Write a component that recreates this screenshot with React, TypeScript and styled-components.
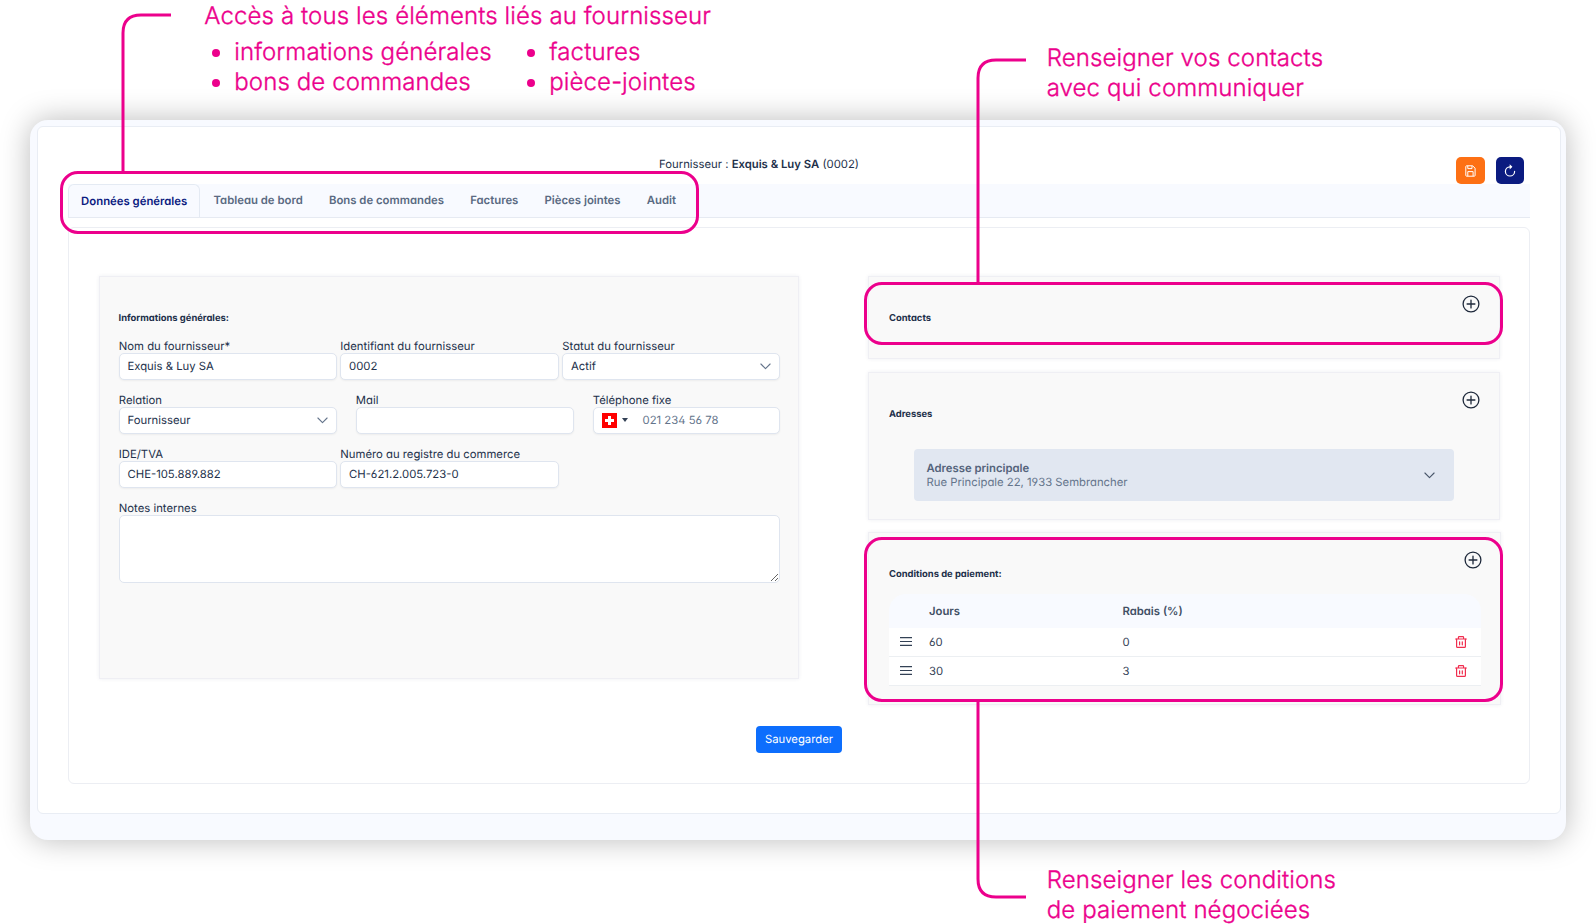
import { ReactNode } from "react";
import styled, { createGlobalStyle } from "styled-components";

const PINK = "#ec008c";

interface Condition {
    id: number;
    jours: number;
    rabais: number;
}

const tabs = ["Données générales", "Tableau de bord", "Bons de commandes", "Factures", "Pièces jointes", "Audit"];

const conditions: Condition[] = [
    { id: 1, jours: 60, rabais: 0 },
    { id: 2, jours: 30, rabais: 3 },
];

function SaveIcon() {
    return <svg width="11" height="12" viewBox="0 0 11 12" fill="none" stroke="#fff" strokeWidth="1">
        <path d="M1.6 0.8H7.6L10.1 3.2V10.4Q10.1 11.2 9.3 11.2H1.6Q0.8 11.2 0.8 10.4V1.6Q0.8 0.8 1.6 0.8Z" />
        <path d="M2.8 0.9V3.6H7V0.9M2.8 11.1V6.6H8.1V11.1" />
    </svg>
}

function RefreshIcon() {
    return <svg width="12" height="13" viewBox="0 0 12 13" fill="none">
        <path d="M10.6 7.4A4.6 4.6 0 1 1 6 2.8H7" stroke="#fff" strokeWidth="1.2" strokeLinecap="round" />
        <path d="M5.7 0.2L8.4 2.8L5.7 5.4Z" fill="#fff" />
    </svg>
}

function PlusCircleIcon() {
    return <svg width="18" height="18" viewBox="0 0 18 18" fill="none" stroke="#1e293b" strokeWidth="1.3" strokeLinecap="round">
        <circle cx="9" cy="9" r="7.9" />
        <path d="M9 5.1V12.9M5.1 9H12.9" />
    </svg>
}

function ChevronIcon({ color = "#64748b" }: { color?: string }) {
    return <svg width="11" height="7" viewBox="0 0 11 7" fill="none" stroke={color} strokeWidth="1.1" strokeLinecap="round" strokeLinejoin="round">
        <path d="M0.9 1L5.5 5.6L10.1 1" />
    </svg>
}

function BarsIcon() {
    return <svg width="12" height="9" viewBox="0 0 12 9" stroke="#334155" strokeWidth="1.2">
        <path d="M0 0.7H12M0 4.5H12M0 8.3H12" />
    </svg>
}

function TrashIcon() {
    return <svg width="12" height="12" viewBox="0 0 12 12" fill="none" stroke="#f02d4e" strokeWidth="1.2" strokeLinecap="round" strokeLinejoin="round">
        <path d="M0.6 3H11.4M3.4 2.8V1.4Q3.4 0.6 4.2 0.6H7.8Q8.6 0.6 8.6 1.4V2.8" />
        <path d="M1.6 3.2V10.4Q1.6 11.4 2.6 11.4H9.4Q10.4 11.4 10.4 10.4V3.2" />
        <path d="M4.6 5.8V8.8M7.3 5.8V8.8" />
    </svg>
}

function SwissFlag() {
    return <svg width="15" height="15" viewBox="0 0 15 15">
        <rect width="15" height="15" fill="#ff0000" />
        <path d="M6 3H9V6H12V9H9V12H6V9H3V6H6Z" fill="#fff" />
    </svg>
}

function Field({ label, children, $width }: { label: string, children?: ReactNode, $width?: number }) {
    return <FieldBox $width={$width}>
        <Label>{label}</Label>
        <Control>{children}</Control>
    </FieldBox>
}

function App() {
    return <Page>
        <GlobalStyle />
        <Shell>
            <Card>
                <Header>
                    <Title>Fournisseur : <b>Exquis &amp; Luy SA</b> (0002)</Title>
                    <Actions>
                        <IconButton $color="#fd7014"><SaveIcon /></IconButton>
                        <IconButton $color="#0b1b80"><RefreshIcon /></IconButton>
                    </Actions>
                </Header>
                <TabBar>
                    {tabs.map((tab, i) => <Tab key={tab} $active={i === 0}>{tab}</Tab>)}
                </TabBar>
                <TabPanel>
                    <Columns>
                        <Panel $height={403}>
                            <PanelTitle>Informations générales:</PanelTitle>
                            <Form>
                                <FieldRow $gap={3.5}>
                                    <Field label="Nom du fournisseur*">Exquis &amp; Luy SA</Field>
                                    <Field label="Identifiant du fournisseur" $width={218.5}>0002</Field>
                                    <Field label="Statut du fournisseur">Actif<Push /><ChevronIcon /></Field>
                                </FieldRow>
                                <FieldRow $gap={19}>
                                    <Field label="Relation">Fournisseur<Push /><ChevronIcon /></Field>
                                    <Field label="Mail" />
                                    <Field label="Téléphone fixe" $width={187.5}>
                                        <SwissFlag /><Caret /><Placeholder>021 234 56 78</Placeholder>
                                    </Field>
                                </FieldRow>
                                <FieldRow $gap={3.5}>
                                    <Field label="IDE/TVA">CHE-105.889.882</Field>
                                    <Field label="Numéro au registre du commerce" $width={218.5}>CH-621.2.005.723-0</Field>
                                </FieldRow>
                                <div>
                                    <Label>Notes internes</Label>
                                    <TextArea />
                                </div>
                            </Form>
                        </Panel>
                        <Side>
                            <Panel $height={83}>
                                <PanelHead>
                                    <PanelTitle>Contacts</PanelTitle>
                                    <PlusCircleIcon />
                                </PanelHead>
                            </Panel>
                            <Panel $height={148}>
                                <PanelHead>
                                    <PanelTitle>Adresses</PanelTitle>
                                    <PlusCircleIcon />
                                </PanelHead>
                                <Address>
                                    <div>
                                        <b>Adresse principale</b>
                                        <p>Rue Principale 22, 1933 Sembrancher</p>
                                    </div>
                                    <ChevronIcon color="#475569" />
                                </Address>
                            </Panel>
                            <Panel $height={173} $wide>
                                <PanelHead>
                                    <PanelTitle>Conditions de paiement:</PanelTitle>
                                    <PlusCircleIcon />
                                </PanelHead>
                                <TableHead>
                                    <span />
                                    <span>Jours</span>
                                    <span>Rabais (%)</span>
                                </TableHead>
                                {conditions.map((c: Condition) => {
                                    return <TableRow key={c.id}>
                                        <BarsIcon />
                                        <span>{c.jours}</span>
                                        <span>{c.rabais}</span>
                                        <TrashIcon />
                                    </TableRow>
                                })}
                            </Panel>
                        </Side>
                    </Columns>
                    <SaveButton>Sauvegarder</SaveButton>
                </TabPanel>
            </Card>
        </Shell>

        {/* annotations drawn over the screen */}
        <Highlight $x={60} $y={171} $w={639} $h={63} />
        <Highlight $x={864} $y={282} $w={639} $h={63} />
        <Highlight $x={864} $y={537} $w={639} $h={165} />
        <Connectors width="1596" height="924" viewBox="0 0 1596 924">
            <path d="M171 15H141Q123 15 123 33V172" />
            <path d="M1026 60H996Q978 60 978 78V283" />
            <path d="M978 701V879Q978 897 996 897H1026" />
        </Connectors>
        <Note $x={204.3} $y={0.5}>
            Accès à tous les éléments liés au fournisseur
            <Bullets>
                <li>informations générales</li>
                <li>factures</li>
                <li>bons de commandes</li>
                <li>pièce-jointes</li>
            </Bullets>
        </Note>
        <Note $x={1046.7} $y={42.5}>Renseigner vos contacts<br />avec qui communiquer</Note>
        <Note $x={1046.7} $y={864.5}>Renseigner les conditions<br />de paiement négociées</Note>
    </Page>
}

export default App;

const GlobalStyle = createGlobalStyle`
    * {
        box-sizing: border-box;
    }
    body {
        margin: 0;
        background: #fff;
    }
    p {
        margin: 0;
    }
    svg {
        flex: none;
        display: block;
    }
`;

const Page = styled.div`
    position: relative;
    width: 1596px;
    height: 924px;
    overflow: hidden;
    padding: 120px 30px 0;
    font-family: Inter, "Liberation Sans", sans-serif;
    font-size: 11.3px;
    text-rendering: geometricPrecision;
    color: #22304a;
`;

const Shell = styled.div`
    height: 720px;
    padding: 6px 5px 0 7px;
    border-radius: 18px;
    background: #f8faff;
    box-shadow: 0 0 30px rgba(0, 0, 0, 0.27);
    font-feature-settings: "cv02", "cv03", "cv04", "cv11";
`;

const Card = styled.div`
    height: 688px;
    padding: 30px 30px 0;
    border: 1px solid #e9edf4;
    border-radius: 6px;
    background: #fff;
`;

const Header = styled.div`
    display: flex;
    height: 27px;
`;

const Title = styled.div`
    flex: 1;
    line-height: 15px;
    text-align: center;
    b {
        font-weight: 600;
    }
`;

const Actions = styled.div`
    display: flex;
    gap: 11px;
    padding: 0 6px;
`;

const IconButton = styled.button<{ $color: string }>`
    display: flex;
    align-items: center;
    justify-content: center;
    width: 28.5px;
    height: 27px;
    padding: 0;
    border: none;
    border-radius: 5px;
    background: ${p => p.$color};
`;

const TabBar = styled.div`
    display: flex;
    height: 34px;
    border-bottom: 1px solid #e6eaf2;
    background: #f8faff;
`;

const Tab = styled.div<{ $active: boolean }>`
    padding: 0 12.1px;
    border: 1px solid ${p => p.$active ? "#e4eaf3" : "transparent"};
    border-bottom: none;
    border-radius: 6px 6px 0 0;
    font-size: 11.35px;
    line-height: ${p => p.$active ? 32 : 31}px;
    font-weight: 600;
    color: ${p => p.$active ? "#0b1b80" : "#5a6a82"};
`;

const TabPanel = styled.div`
    height: 557px;
    margin-top: 9px;
    padding: 48px 28px 0 30px;
    border: 1px solid #eceef3;
    border-radius: 6px;
`;

const Columns = styled.div`
    display: flex;
    align-items: flex-start;
    gap: 69px;
    height: 450px;
`;

const Panel = styled.div<{ $height: number, $wide?: boolean }>`
    width: ${p => p.$wide ? "633px" : "auto"};
    height: ${p => p.$height}px;
    padding: 35px 18px 0 18.5px;
    border: 1px solid #efeff4;
    background: #f9f9f9;
    box-shadow: 0 0 4px rgba(30, 41, 90, 0.07);
`;

const Side = styled.div`
    display: flex;
    flex-direction: column;
    gap: 13px;
    width: 632px;
    ${Panel} {
        padding: 35px 20px 0;
    }
    ${Panel}:last-child {
        margin-top: -1px;
        padding-right: 19px;
    }
`;

const PanelHead = styled.div`
    display: flex;
    justify-content: space-between;
    height: 12px;
    svg {
        margin: -17px -0.5px 0 0;
    }
`;

const PanelTitle = styled.div`
    font-size: 9.42px;
    line-height: 13px;
    font-weight: 700;
`;

const Form = styled.div`
    display: flex;
    flex-direction: column;
    gap: 13px;
    width: 661.5px;
    margin-top: 14px;
`;

const FieldRow = styled.div<{ $gap: number }>`
    display: flex;
    gap: ${p => p.$gap}px;
`;

const FieldBox = styled.div<{ $width?: number }>`
    width: ${p => p.$width ?? 218}px;
`;

const Label = styled.div`
    padding-left: 0.3px;
    line-height: 14px;
`;

const Control = styled.div`
    display: flex;
    align-items: center;
    height: 27px;
    padding: 0 8px 1px;
    border: 1px solid #dfe5ef;
    border-radius: 5px;
    background: #fff;
    box-shadow: 0 1px 2px rgba(18, 18, 23, 0.05);
    line-height: 13px;
`;

const Push = styled.span`
    flex: 1;
`;

const Caret = styled.span`
    margin-left: 5px;
    border: 3px solid transparent;
    border-top: 4px solid #334155;
    border-bottom: none;
`;

const Placeholder = styled.span`
    margin-left: 15px;
    color: #64748b;
`;

const TextArea = styled.textarea`
    display: block;
    width: 661.5px;
    height: 68px;
    border: 1px solid #dfe5ef;
    border-radius: 5px;
    background: #fff;
    resize: vertical;
`;

const Address = styled.div`
    display: flex;
    align-items: center;
    justify-content: space-between;
    width: 540px;
    height: 52px;
    margin: 29px 0 0 25px;
    padding: 0 19px 0 12.5px;
    border-radius: 4px;
    background: #e1e7f1;
    line-height: 13.7px;
    color: #64748b;
    div {
        padding-top: 2px;
    }
    b {
        font-weight: 600;
        color: #54637b;
    }
`;

const TableHead = styled.div`
    display: grid;
    grid-template-columns: 40px 193.5px 1fr;
    align-items: center;
    height: 34px;
    margin-top: 14px;
    border-radius: 17px 17px 0 0;
    background: #f8faff;
    font-weight: 600;
    color: #414f64;
`;

const TableRow = styled.div`
    display: grid;
    grid-template-columns: 29px 193.5px 1fr 26.5px;
    align-items: center;
    height: 29px;
    padding-left: 11px;
    border-bottom: 1px solid #eceff2;
    background: #fff;
    color: #334155;
    svg:first-child {
        margin-top: -2px;
    }
`;

const SaveButton = styled.button`
    display: block;
    width: 86px;
    height: 27px;
    margin: 0 0 0 657px;
    padding: 0 0 1px;
    border: none;
    border-radius: 4px;
    background: #0d6efd;
    font: 400 11.3px Inter, sans-serif;
    text-rendering: geometricPrecision;
    color: #fff;
`;

const Highlight = styled.div<{ $x: number, $y: number, $w: number, $h: number }>`
    position: absolute;
    left: ${p => p.$x}px;
    top: ${p => p.$y}px;
    width: ${p => p.$w}px;
    height: ${p => p.$h}px;
    border: 3px solid ${PINK};
    border-radius: 18px;
`;

const Connectors = styled.svg`
    position: absolute;
    left: 0;
    top: 0;
    fill: none;
    stroke: ${PINK};
    stroke-width: 3;
    pointer-events: none;
`;

const Note = styled.div<{ $x: number, $y: number }>`
    position: absolute;
    left: ${p => p.$x}px;
    top: ${p => p.$y}px;
    font-size: 24px;
    letter-spacing: 0.11px;
    line-height: 30px;
    font-weight: 300;
    -webkit-text-stroke: 0.35px ${PINK};
    white-space: nowrap;
    color: ${PINK};
`;

const Bullets = styled.ul`
    display: grid;
    grid-template-columns: 315px auto;
    margin: 6px 0 0;
    padding: 0 0 0 8px;
    list-style: none;
    li {
        display: flex;
        align-items: center;
        gap: 14px;
    }
    li::before {
        content: "";
        width: 8px;
        height: 8px;
        margin-top: 2px;
        border-radius: 50%;
        background: ${PINK};
    }
`;
